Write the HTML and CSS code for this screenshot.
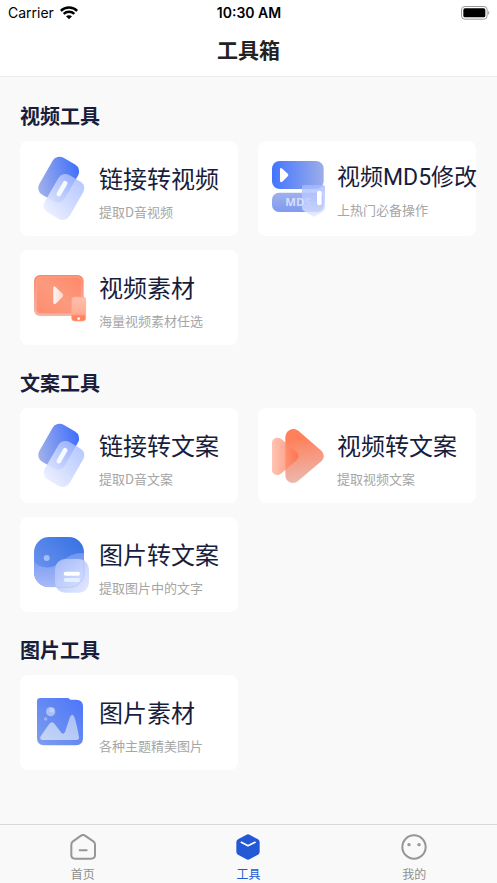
FILE: index.html
```html
<!DOCTYPE html>
<html lang="zh-CN">
<head>
<meta charset="utf-8">
<meta name="viewport" content="width=device-width, initial-scale=1">
<title>工具箱</title>
<link rel="stylesheet" href="styles.css">
</head>
<body>
<header class="top">
  <div class="status">
    <div class="carrier">Carrier
      <svg width="18" height="14" viewBox="0 0 54 42" aria-hidden="true"><g fill="none" stroke="#000" stroke-width="7"><path d="M2.500 14.500C16 1 38 1 51.500 14.500"/><path d="M11 23.500C20 15 34 15 43 23.500"/></g><path d="M18 31C23 26.500 31 26.500 36 31L27 40Z"/></svg>
    </div>
    <time class="clock">10:30 AM</time>
    <svg class="battery" width="29" height="14" viewBox="0 0 87 42" aria-hidden="true"><rect x="1.500" y="1.500" width="77" height="38" rx="10" fill="none" stroke="#999" stroke-width="3"/><rect x="7" y="7" width="66" height="27" rx="5"/><path d="M82 14Q88 20 82 27Z" fill="#888"/></svg>
  </div>
  <h1 class="title">工具箱</h1>
</header>

<main class="content">
  <section>
    <h2 class="heading">视频工具</h2>
    <div class="grid">
      <a class="card" href="#link-video">
        <svg class="icon" viewBox="0 3 237 285" aria-hidden="true">
          <defs>
            <linearGradient id="tileBack" gradientUnits="userSpaceOnUse" x1="165" y1="75" x2="70" y2="165"><stop stop-color="#416ffb"/><stop offset="1" stop-color="#a0b1ea"/></linearGradient>
            <linearGradient id="tileFront" gradientUnits="userSpaceOnUse" x1="155" y1="105" x2="110" y2="240"><stop stop-color="#a6bcff" stop-opacity=".8"/><stop offset="1" stop-color="#edf0ff" stop-opacity=".95"/></linearGradient>
          </defs>
          <rect x="72" y="55" width="88" height="128" rx="24" transform="rotate(30 116 119)" fill="url(#tileBack)"/>
          <rect x="89" y="106" width="86" height="130" rx="24" transform="rotate(30 132 171)" fill="url(#tileFront)"/>
          <rect x="119" y="120" width="14" height="52" rx="7" transform="rotate(30 126 146)" fill="#f5fbff"/>
        </svg>
        <span class="text"><span class="name">链接转视频</span><span class="desc">提取D音视频</span></span>
      </a>
      <a class="card" href="#md5">
        <svg class="icon" viewBox="0 3 237 285" aria-hidden="true">
          <defs>
            <linearGradient id="md5Top"><stop stop-color="#4275ff"/><stop offset="1" stop-color="#9cade8"/></linearGradient>
            <linearGradient id="md5Bottom" x2="0" y2="1"><stop stop-color="#a0b0ec"/><stop offset="1" stop-color="#7d9bf0"/></linearGradient>
            <linearGradient id="md5Badge" x2="0" y2="1"><stop stop-color="#a4b9ff" stop-opacity=".8"/><stop offset="1" stop-color="#e0e7ff" stop-opacity=".8"/></linearGradient>
          </defs>
          <rect x="42" y="63" width="155" height="84" rx="23" fill="url(#md5Top)"/>
          <path d="M66 88Q67 81 73 86L90 102Q92 105 90 108L73 125Q67 129 66 122Z" fill="#fff"/>
          <rect x="42" y="158" width="155" height="58" rx="21" fill="url(#md5Bottom)"/>
          <path d="M139 135H194Q201 135 201 142V204Q201 212 194 215L167 230L139 214Q132 211 132 204V142Q132 135 139 135Z" fill="url(#md5Badge)"/>
          <text class="icon-label" x="82" y="199">MD<tspan class="icon-label-dim">5</tspan></text>
          <rect x="177" y="152" width="14" height="44" rx="7" fill="#fff"/>
        </svg>
        <span class="text text-compact"><span class="name name-long">视频MD5修改</span><span class="desc">上热门必备操作</span></span>
      </a>
      <a class="card" href="#video-assets">
        <svg class="icon" viewBox="0 3 237 285" aria-hidden="true">
          <defs>
            <linearGradient id="screenEdge" x2="0" y2="1"><stop stop-color="#ff8767"/><stop offset="1" stop-color="#f3b5a9"/></linearGradient>
            <linearGradient id="screenFace" x1="1" y1="0" x2="0" y2="1"><stop stop-color="#ff8767"/><stop offset=".5" stop-color="#fb9a7e"/><stop offset="1" stop-color="#ff8c6d"/></linearGradient>
            <linearGradient id="playFace"><stop stop-color="#fff" stop-opacity=".9"/><stop offset="1" stop-color="#ffe5de" stop-opacity=".8"/></linearGradient>
            <linearGradient id="phoneFace" x2="0" y2="1"><stop stop-color="#ffc0ae"/><stop offset=".7" stop-color="#ffaa92"/><stop offset=".8" stop-color="#ff8461"/><stop offset="1" stop-color="#ff825e"/></linearGradient>
          </defs>
          <rect x="42" y="78" width="149" height="123" rx="18" fill="url(#screenEdge)"/>
          <rect x="49" y="84" width="135" height="110" rx="13" fill="url(#screenFace)" stroke="#f9ad98" stroke-width="2"/>
          <path d="M100 116Q101 109 107 114L128 135Q131 139 128 143L107 164Q101 168 100 161Z" fill="url(#playFace)"/>
          <rect x="155" y="144" width="42" height="72" rx="9" fill="url(#phoneFace)" stroke="#ffa58c" stroke-width="2"/>
          <circle cx="176" cy="209" r="4" fill="#fff"/>
        </svg>
        <span class="text"><span class="name">视频素材</span><span class="desc">海量视频素材任选</span></span>
      </a>
    </div>
  </section>

  <section>
    <h2 class="heading">文案工具</h2>
    <div class="grid">
      <a class="card" href="#link-copy">
        <svg class="icon" viewBox="0 3 237 285" aria-hidden="true">
          <rect x="72" y="55" width="88" height="128" rx="24" transform="rotate(30 116 119)" fill="url(#tileBack)"/>
          <rect x="89" y="106" width="86" height="130" rx="24" transform="rotate(30 132 171)" fill="url(#tileFront)"/>
          <rect x="119" y="120" width="14" height="52" rx="7" transform="rotate(30 126 146)" fill="#f5fbff"/>
        </svg>
        <span class="text"><span class="name">链接转文案</span><span class="desc">提取D音文案</span></span>
      </a>
      <a class="card" href="#video-copy">
        <svg class="icon" viewBox="0 6 237 285" aria-hidden="true">
          <defs>
            <linearGradient id="arrowBig" x1=".2" y1=".1" x2=".3" y2="1"><stop offset=".1" stop-color="#ff805b"/><stop offset="1" stop-color="#ebb9af"/></linearGradient>
            <linearGradient id="arrowSmall" x1="1" y1="0" x2="0" y2="0"><stop stop-color="#ff6a42" stop-opacity=".75"/><stop offset="1" stop-color="#ffb5a2" stop-opacity=".8"/></linearGradient>
          </defs>
          <path d="M82 95C82 73 103 61 121 74L190 134Q205 149 190 166L121 224C103 239 82 227 82 207Z" fill="url(#arrowBig)"/>
          <path d="M42 110C42 97 58 91 69 98L116 139Q128 151 116 163L69 203C57 212 42 205 42 193Z" fill="url(#arrowSmall)"/>
        </svg>
        <span class="text"><span class="name">视频转文案</span><span class="desc">提取视频文案</span></span>
      </a>
      <a class="card" href="#image-copy">
        <svg class="icon" viewBox="0 6 237 285" aria-hidden="true">
          <defs>
            <linearGradient id="photoSky" x1="1" y1="0" x2="0" y2="1"><stop stop-color="#3470e3"/><stop offset="1" stop-color="#769af0"/></linearGradient>
            <linearGradient id="photoHill" x2="0" y2="1"><stop stop-color="#7095ed"/><stop offset="1" stop-color="#a9bafa"/></linearGradient>
            <linearGradient id="noteFace" x1="0" y1="0" x2="1" y2="1"><stop stop-color="#a5bcf9" stop-opacity=".95"/><stop offset="1" stop-color="#e4e8ff" stop-opacity=".95"/></linearGradient>
            <clipPath id="photoClip"><rect x="42" y="66" width="150" height="151" rx="46"/></clipPath>
          </defs>
          <g clip-path="url(#photoClip)">
            <path d="M42 66H192V217H42Z" fill="url(#photoSky)"/>
            <path d="M42 139C60 160 88 164 112 148C137 129 156 112 192 114V217H42Z" fill="url(#photoHill)"/>
          </g>
          <circle cx="80" cy="129" r="9" fill="#a5bdf6"/>
          <rect x="105" y="132" width="102" height="101" rx="31" fill="url(#noteFace)"/>
          <path d="M192 134V172C192 201 172 217 145 217H109" fill="none" stroke="#9eb4f5" stroke-opacity=".45" stroke-width="3"/>
          <rect x="131" y="170" width="49" height="12" rx="6" fill="#fff"/><rect x="131" y="189" width="49" height="12" rx="6" fill="#e4efff"/>
        </svg>
        <span class="text"><span class="name">图片转文案</span><span class="desc">提取图片中的文字</span></span>
      </a>
    </div>
  </section>

  <section>
    <h2 class="heading">图片工具</h2>
    <div class="grid">
      <a class="card" href="#image-assets">
        <svg class="icon" viewBox="0 6 237 285" aria-hidden="true">
          <defs>
            <linearGradient id="albumFace" x1="1" y1="0" x2="0" y2="1"><stop stop-color="#4d75fb"/><stop offset=".5" stop-color="#6489f2"/><stop offset="1" stop-color="#809eed"/></linearGradient>
            <linearGradient id="peaks" x1="1" y1="0" x2="0" y2="1"><stop stop-color="#a9c0f5"/><stop offset="1" stop-color="#c5d5f7"/></linearGradient>
          </defs>
          <path d="M61 75H145L151 80H168Q189 80 189 101V195Q189 217 168 217H72Q51 217 51 195V85Q51 75 61 75Z" fill="url(#albumFace)"/>
          <path d="M62 190L86 155Q95 142 104 153L124 179Q131 187 136 175L149 134Q157 116 164 134Q171 157 177 192Q178 201 169 201H67Q57 200 62 190Z" fill="url(#peaks)"/>
          <circle cx="92" cy="116" r="14" fill="#a9bff8"/><circle cx="95" cy="112" r="7" fill="#c3d2fb"/><circle cx="77" cy="138" r="5" fill="#9db4f5"/>
        </svg>
        <span class="text"><span class="name">图片素材</span><span class="desc">各种主题精美图片</span></span>
      </a>
    </div>
  </section>
</main>

<nav class="tabs">
  <a class="tab" href="#home">
    <svg width="26" height="26" viewBox="0 0 78 78" fill="none" stroke="#969696" stroke-width="6" stroke-linejoin="round" stroke-linecap="round" aria-hidden="true"><path d="M33 5Q39 1 45 5L70 22Q75 26 75 32V63Q75 74 63 74H15Q4 74 4 63V32Q4 26 9 22Z"/><path d="M29 49H50"/></svg>
    首页
  </a>
  <a class="tab active" href="#tools" aria-current="page">
    <svg width="26" height="26" viewBox="0 0 78 78" aria-hidden="true"><path d="M33 3Q39 -1 45 3L69 16Q74 19 74 25V53Q74 59 69 62L45 75Q39 79 33 75L9 62Q4 59 4 53V25Q4 19 9 16Z" fill="#2459d5"/><path d="M19 25L39 35L60 25" fill="none" stroke="#fff" stroke-width="5" stroke-linecap="round" stroke-linejoin="round"/></svg>
    工具
  </a>
  <a class="tab" href="#me">
    <svg width="26" height="26" viewBox="0 0 78 78" aria-hidden="true"><circle cx="39" cy="39" r="35" fill="none" stroke="#969696" stroke-width="6"/><circle cx="24" cy="32" r="5" fill="#969696"/><circle cx="54" cy="32" r="5" fill="#969696"/></svg>
    我的
  </a>
</nav>
</body>
</html>
```
FILE: styles.css
```css
* { box-sizing: border-box; }

body {
  margin: 0;
  min-height: 100vh;
  display: flex;
  flex-direction: column;
  background: #f9f9f9;
  color: #181d3b;
  font-family: "Noto Sans CJK SC", sans-serif;
}

a { color: inherit; text-decoration: none; }
svg { display: block; flex: none; }

.top {
  background: #fff;
  border-bottom: 1px solid #ececec;
}

.status {
  display: grid;
  grid-template-columns: 1fr auto 1fr;
  align-items: center;
  height: 26px;
  padding: 0 7px 0 8px;
  color: #000;
  font: 14px/26px Inter, sans-serif;
}

.carrier {
  display: flex;
  align-items: center;
  gap: 6px;
}

.clock { font-weight: 600; }
.battery { justify-self: end; }

.title {
  margin: 0;
  padding-bottom: 3px;
  color: #222;
  font-size: 21px;
  font-weight: 700;
  line-height: 47px;
  text-align: center;
}

.content {
  flex: 1;
  padding: 14px 21px 20px 20px;
}

.heading {
  margin: 0;
  padding: 10px 0;
  font-size: 20px;
  font-weight: 700;
  line-height: 30px;
}

section + section { margin-top: 13px; }

.grid {
  display: grid;
  grid-template-columns: 1fr 1fr;
  gap: 14px 20px;
}

.card {
  display: flex;
  min-width: 0;
  border-radius: 8px;
  background: #fff;
}

.icon { width: 79px; height: 95px; }

.icon-label {
  fill: #d5dffc;
  font: 700 34px "Open Sans", sans-serif;
}

.icon-label-dim { fill: #c3d0fb; }

.text {
  display: flex;
  flex-direction: column;
  gap: 5px;
  padding-top: 18px;
  white-space: nowrap;
}

.text-compact { gap: 3px; }

.name {
  font-size: 24px;
  line-height: 38px;
}

.name-long {
  font-family: Roboto, "Noto Sans CJK SC", sans-serif;
  font-size: 23px;
}

.desc {
  color: #a6a6a6;
  font-size: 13px;
  line-height: 20px;
}

.tabs {
  position: sticky;
  bottom: 0;
  display: grid;
  grid-template-columns: repeat(3, 1fr);
  padding: 9px 0 0;
  border-top: 1px solid #d9d9d9;
  background: #f9f9f9;
}

.tab {
  display: flex;
  flex-direction: column;
  align-items: center;
  gap: 4px;
  color: #8e8e8e;
  font-size: 12px;
  line-height: 19px;
}

.tab.active { color: #2459d5; }
```
